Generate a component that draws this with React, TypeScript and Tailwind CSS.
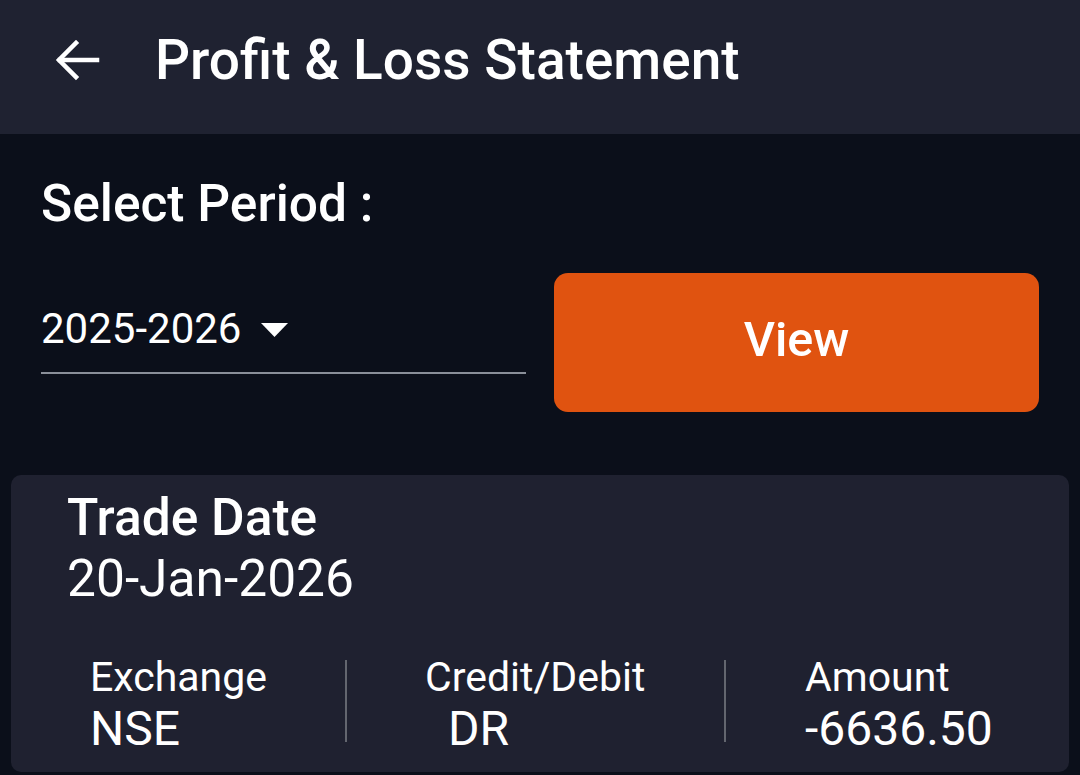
import React from "react";

const font = { fontFamily: "Roboto, 'Noto Sans', sans-serif" };

export default function App() {
  return (
    <div className="w-[1080px] h-[775px] overflow-hidden bg-[#0b0f1a] text-white" style={font}>
      <div className="h-[134px] bg-[#1f2231] flex items-center pl-[52px] pb-[14px]">
        <svg width="50" height="46" viewBox="0 0 50 46" fill="none" stroke="white" strokeWidth="4.5" strokeLinecap="square">
          <path d="M45 23H8" />
          <path d="M24 6L7 23L24 40" strokeLinejoin="miter" />
        </svg>
        <span className="ml-[53px] text-[55px] font-medium leading-none">Profit &amp; Loss Statement</span>
      </div>
      <div className="px-[41px] pt-[44px]">
        <div className="text-[51.5px] font-medium leading-none">Select Period :</div>
        <div className="flex mt-[43px] items-start">
          <div className="w-[485px] h-[101px] border-b-2 border-[#8a8f99] pt-[35px]">
            <div className="flex items-center">
              <span className="text-[42px] leading-none">2025-2026</span>
              <svg className="ml-[20px] mt-[2px]" width="27" height="14" viewBox="0 0 27 14"><path d="M0 0H27L13.5 14Z" fill="white" /></svg>
            </div>
          </div>
          <div className="ml-[28px] w-[485px] h-[139px] rounded-[14px] bg-[#e05310] flex items-center justify-center pb-[3px] text-[48.5px] font-medium leading-none">View</div>
        </div>
      </div>
      <div className="mx-[11px] mt-[63px] bg-[#1f2130] rounded-[10px] h-[297px] pt-[12px] pl-[56px]">
        <div className="text-[51.5px] font-medium leading-[61px]">Trade Date</div>
        <div className="text-[51.5px] leading-[61px]">20-Jan-2026</div>
        <div className="flex mt-[44px] pl-[23px] items-start">
          <div className="w-[255px]">
            <div className="text-[41px] leading-[48px]">Exchange</div>
            <div className="text-[48px] leading-[56px]">NSE</div>
          </div>
          <div className="w-[2px] mt-[7px] h-[82px] bg-[#63666f]" />
          <div className="w-[377px] pl-[78px]">
            <div className="text-[41px] leading-[48px]">Credit/Debit</div>
            <div className="text-[48px] leading-[56px] pl-[23px]">DR</div>
          </div>
          <div className="w-[2px] mt-[7px] h-[82px] bg-[#63666f]" />
          <div className="pl-[79px]">
            <div className="text-[41px] leading-[48px]">Amount</div>
            <div className="text-[48px] leading-[56px]">-6636.50</div>
          </div>
        </div>
      </div>
    </div>
  );
}
